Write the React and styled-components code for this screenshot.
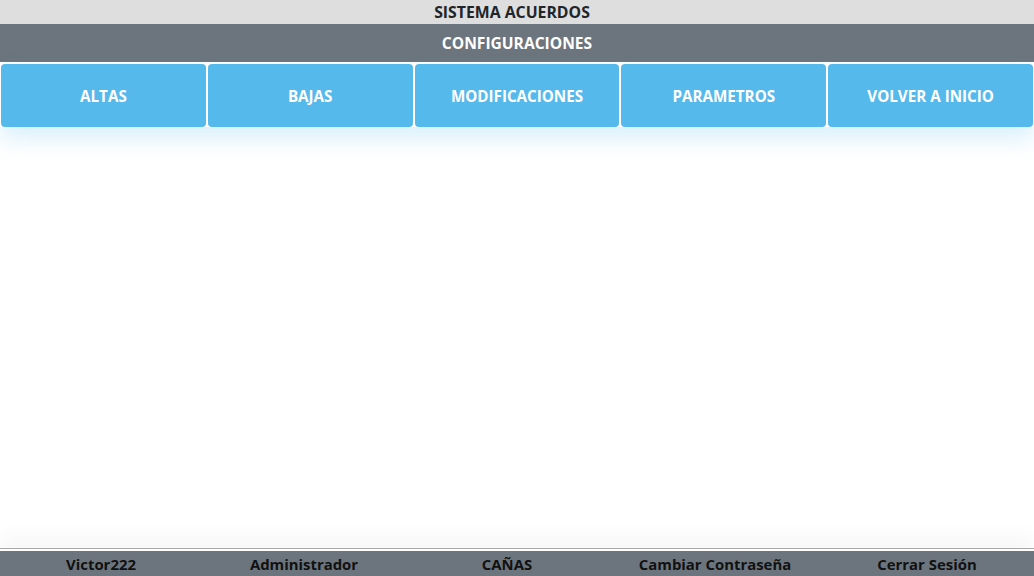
import React from 'react';
import styled, { createGlobalStyle } from 'styled-components';

const GlobalStyle = createGlobalStyle`
  html, body, #root {
    margin: 0;
    padding: 0;
    height: 100%;
  }
  body {
    font-family: "Open Sans", "Noto Sans", sans-serif;
    background: #ffffff;
  }
`;

const Page = styled.div`
  display: flex;
  flex-direction: column;
  min-height: 100vh;
`;

const TitleBar = styled.div`
  height: 24px;
  line-height: 25px;
  padding-right: 10px;
  background: #dedede;
  color: #212529;
  text-align: center;
  font-weight: 700;
  font-size: 15.8px;
`;

const SectionBar = styled.div`
  height: 38px;
  line-height: 39px;
  background: #6c757d;
  color: #ffffff;
  text-align: center;
  font-weight: 700;
  font-size: 15.6px;
  margin-bottom: 2px;
`;

const MenuRow = styled.nav`
  display: grid;
  grid-template-columns: repeat(5, 1fr);
  gap: 2px;
  padding: 0 1px;
  box-shadow: 0 12px 22px rgba(86, 185, 236, 0.22);
`;

const MenuButton = styled.button`
  height: 63px;
  padding: 0;
  border: none;
  border-radius: 4px;
  background: #56b9eb;
  color: #ffffff;
  font-family: inherit;
  font-weight: 700;
  font-size: 15.2px;
  cursor: pointer;
`;

const Content = styled.main`
  flex: 1;
`;

const Footer = styled.footer`
  border-top: 1px solid #a9a9a9;
  padding-top: 2px;
  box-shadow: 0 -12px 20px rgba(0, 0, 0, 0.035);
`;

const FooterBar = styled.div`
  display: grid;
  grid-template-columns: 202fr 204fr 202fr 214fr 210fr;
  padding-right: 2px;
  height: 25px;
  line-height: 27px;
  background: #6c757d;
  color: #111111;
  font-weight: 700;
  font-size: 14.9px;
  text-align: center;
`;

const FooterItem = styled.span`
  white-space: nowrap;
  cursor: ${(p) => (p.$link ? 'pointer' : 'default')};
`;

const menu = ['ALTAS', 'BAJAS', 'MODIFICACIONES', 'PARAMETROS', 'VOLVER A INICIO'];

export default function App() {
  return (
    <>
      <GlobalStyle />
      <Page>
        <TitleBar>SISTEMA ACUERDOS</TitleBar>
        <SectionBar>CONFIGURACIONES</SectionBar>
        <MenuRow>
          {menu.map((m) => (
            <MenuButton key={m}>{m}</MenuButton>
          ))}
        </MenuRow>
        <Content />
        <Footer>
          <FooterBar>
            <FooterItem>Victor222</FooterItem>
            <FooterItem>Administrador</FooterItem>
            <FooterItem>CAÑAS</FooterItem>
            <FooterItem $link>Cambiar Contraseña</FooterItem>
            <FooterItem $link>Cerrar Sesión</FooterItem>
          </FooterBar>
        </Footer>
      </Page>
    </>
  );
}
